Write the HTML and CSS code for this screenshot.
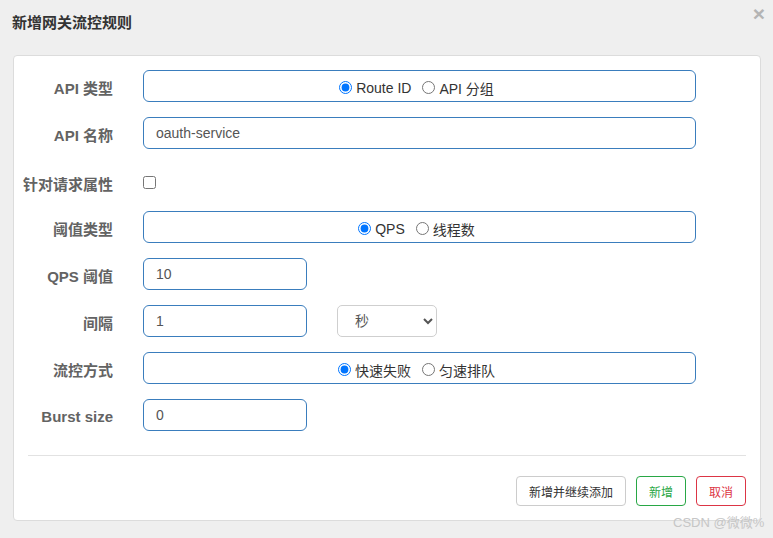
FILE: index.html
```html
<!DOCTYPE html>
<html lang="zh-CN">
<head>
<meta charset="utf-8">
<title>新增网关流控规则</title>
<link rel="stylesheet" href="styles.css">
</head>
<body>
<div class="dialog">
  <div class="dialog-header">
    <h4 class="dialog-title">新增网关流控规则</h4>
    <span class="close">×</span>
  </div>
  <div class="card">
    <div class="row">
      <label class="lbl">API 类型</label>
      <div class="box wide radios">
        <label class="opt"><input type="radio" name="apitype" checked>Route ID</label>
        <label class="opt"><input type="radio" name="apitype">API 分组</label>
      </div>
    </div>
    <div class="row">
      <label class="lbl">API 名称</label>
      <input class="box wide text" type="text" value="oauth-service">
    </div>
    <div class="row check-row">
      <label class="lbl">针对请求属性</label>
      <input class="chk" type="checkbox">
    </div>
    <div class="row">
      <label class="lbl">阈值类型</label>
      <div class="box wide radios">
        <label class="opt"><input type="radio" name="grade" checked>QPS</label>
        <label class="opt"><input type="radio" name="grade">线程数</label>
      </div>
    </div>
    <div class="row">
      <label class="lbl">QPS 阈值</label>
      <input class="box small text" type="text" value="10">
    </div>
    <div class="row">
      <label class="lbl">间隔</label>
      <input class="box small text" type="text" value="1">
      <select class="unit">
        <option>秒</option>
        <option>分</option>
        <option>时</option>
        <option>天</option>
      </select>
    </div>
    <div class="row">
      <label class="lbl">流控方式</label>
      <div class="box wide radios">
        <label class="opt"><input type="radio" name="behavior" checked>快速失败</label>
        <label class="opt"><input type="radio" name="behavior">匀速排队</label>
      </div>
    </div>
    <div class="row last">
      <label class="lbl">Burst size</label>
      <input class="box small text" type="text" value="0">
    </div>
    <div class="footer">
      <button class="btn btn-default">新增并继续添加</button>
      <button class="btn btn-success">新增</button>
      <button class="btn btn-danger">取消</button>
    </div>
  </div>
  <div class="watermark">CSDN @微微%</div>
</div>
</body>
</html>
```

FILE: styles.css
```css
html, body {
  margin: 0;
  padding: 0;
}
body {
  background: #efefef;
  font-family: "Liberation Sans", "Noto Sans CJK SC", sans-serif;
  font-size: 14px;
  color: #333;
  width: 773px;
  height: 538px;
  overflow: hidden;
}
.dialog {
  position: relative;
  height: 538px;
}
.dialog-header {
  display: flex;
  justify-content: space-between;
  align-items: flex-start;
  height: 55px;
  box-sizing: border-box;
  padding: 13px 8px 0 12px;
}
.dialog-title {
  margin: 0;
  font-size: 15px;
  line-height: 20px;
  font-weight: bold;
  color: #333;
}
.close {
  margin-top: -10px;
  font-size: 21px;
  line-height: 21px;
  font-weight: bold;
  color: #b4b4b4;
}
.card {
  margin-left: 13px;
  width: 748px;
  box-sizing: border-box;
  background: #fff;
  border: 1px solid #dcdcdc;
  border-radius: 4px;
  padding: 14px 0 14px 0;
}
.row {
  display: flex;
  align-items: center;
  height: 32px;
  margin-bottom: 15px;
}
.row.last {
  margin-bottom: 0;
}
.check-row {
  box-sizing: border-box;
  padding-top: 5px;
}
.lbl {
  width: 99px;
  flex: 0 0 99px;
  margin-right: 30px;
  padding-top: 2px;
  text-align: right;
  font-weight: bold;
  color: #636363;
  font-size: 15px;
  white-space: nowrap;
}
.box {
  box-sizing: border-box;
  height: 32px;
  border: 1px solid #3a7dbd;
  border-radius: 6px;
  background: #fff;
  font-family: "Liberation Sans", "Noto Sans CJK SC", sans-serif;
  font-size: 14px;
  color: #555;
}
.text {
  padding: 0 12px;
  outline: none;
  margin: 0;
}
.wide {
  width: 553px;
}
.small {
  width: 164px;
}
.radios {
  display: flex;
  justify-content: center;
  align-items: center;
  gap: 11px;
  padding-right: 6px;
  padding-top: 3px;
  color: #333;
}
.opt {
  display: flex;
  align-items: center;
}
.opt input {
  margin: 0 4px 0 0;
  width: 13px;
  height: 13px;
}
.chk {
  margin: 0;
  width: 13px;
  height: 13px;
}
.unit {
  margin-left: 30px;
  width: 100px;
  height: 32px;
  box-sizing: border-box;
  border: 1px solid #cfcfcf;
  border-radius: 5px;
  background: #fff;
  padding-left: 13px;
  font-family: "Liberation Sans", "Noto Sans CJK SC", sans-serif;
  font-size: 14px;
  color: #555;
}
.footer {
  margin: 24px 14px 0 14px;
  border-top: 1px solid #e2e2e2;
  padding-top: 20px;
  display: flex;
  justify-content: flex-end;
  gap: 10px;
}
.btn {
  height: 30px;
  box-sizing: border-box;
  padding: 0 12px;
  border-radius: 4px;
  background: #fff;
  font-family: "Liberation Sans", "Noto Sans CJK SC", sans-serif;
  font-size: 12px;
  cursor: pointer;
}
.btn-default {
  border: 1px solid #cccccc;
  color: #333;
}
.btn-success {
  border: 1px solid #28a745;
  color: #28a745;
}
.btn-danger {
  border: 1px solid #dc3545;
  color: #dc3545;
}
.watermark {
  position: absolute;
  left: 673px;
  top: 515px;
  font-size: 13px;
  line-height: 16px;
  color: #c6c6c6;
  white-space: nowrap;
}
```
